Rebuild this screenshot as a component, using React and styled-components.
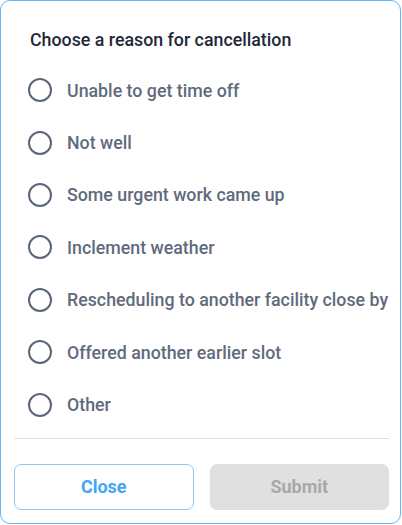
import React from 'react';
import styled, { createGlobalStyle } from 'styled-components';

const Global = createGlobalStyle`
  html, body { margin: 0; padding: 0; background: #fff; }
  body { font-family: Roboto, "Noto Sans", sans-serif; }
`;

const Card = styled.div`
  box-sizing: border-box;
  width: 401px;
  height: 524px;
  border: 1.5px solid #64b5f6;
  border-radius: 10px;
  display: flex;
  flex-direction: column;
  padding: 0 11px 0 13px;
  background: #fff;
`;

const Title = styled.h2`
  margin: 0;
  padding: 28px 0 0 16px;
  height: 35px;
  font-size: 17.8px;
  line-height: 22px;
  font-weight: 500;
  color: #1f2937;
`;

const List = styled.div`
  display: flex;
  flex-direction: column;
`;

const Option = styled.label`
  display: flex;
  align-items: center;
  gap: 15px;
  height: 52.4px;
  padding-left: 14px;
  cursor: pointer;
`;

const Radio = styled.span`
  box-sizing: border-box;
  width: 24px;
  height: 24px;
  border-radius: 50%;
  border: 2px solid #5b6678;
  flex-shrink: 0;
`;

const OptionText = styled.span`
  font-size: 17.8px;
  font-weight: 500;
  color: #5f6b7d;
  white-space: nowrap;
`;

const Divider = styled.hr`
  margin: 7px 0 0;
  border: none;
  border-top: 1px solid #e0e0e0;
`;

const Footer = styled.div`
  display: grid;
  grid-template-columns: 1fr 1fr;
  gap: 16px;
  padding-top: 25px;
`;

const Button = styled.button`
  box-sizing: border-box;
  height: 46px;
  border-radius: 7px;
  font-family: Roboto, sans-serif;
  font-size: 18px;
  font-weight: 700;
  border: 1px solid ${p => (p.$primary ? '#90caf9' : '#e0e0e0')};
  background: ${p => (p.$primary ? '#fff' : '#e0e0e0')};
  color: ${p => (p.$primary ? '#42a5f5' : '#a8a8a8')};
`;

const reasons = [
  'Unable to get time off',
  'Not well',
  'Some urgent work came up',
  'Inclement weather',
  'Rescheduling to another facility close by',
  'Offered another earlier slot',
  'Other',
];

export default function App() {
  return (
    <>
      <Global />
      <Card>
        <Title>Choose a reason for cancellation</Title>
        <List>
          {reasons.map(r => (
            <Option key={r}>
              <Radio />
              <OptionText>{r}</OptionText>
            </Option>
          ))}
        </List>
        <Divider />
        <Footer>
          <Button $primary>Close</Button>
          <Button disabled>Submit</Button>
        </Footer>
      </Card>
    </>
  );
}
